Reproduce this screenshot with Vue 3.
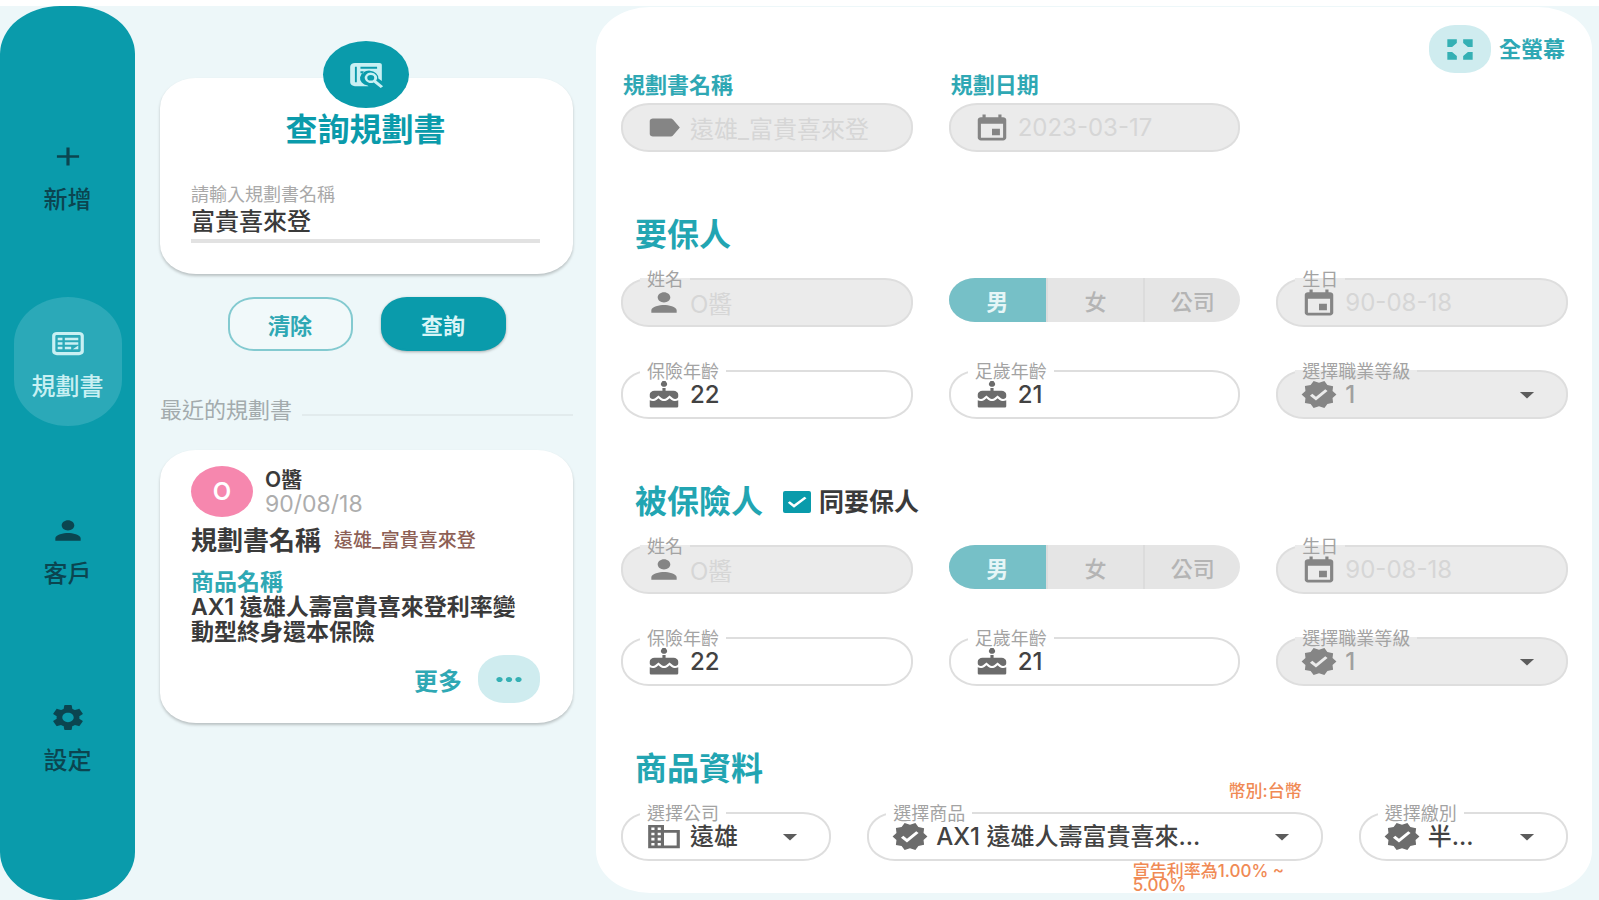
<script setup>
import { h, ref } from 'vue'

const paths = {
  plus: 'M19 13h-6v6h-2v-6H5v-2h6V5h2v6h6v2z',
  plan: 'M19 3H5C3.300 3 2 4.200 2 5.800v12.400C2 19.800 3.300 21 5 21h14c1.700 0 3-1.200 3-2.800V5.800C22 4.200 20.700 3 19 3zM5 5.500h14c.6 0 1 .4 1 1v11c0 .6-.4 1-1 1H5c-.6 0-1-.4-1-1v-11c0-.6.4-1 1-1zM5.500 7.500h3v2h-3zM5.500 11h3v2h-3zM5.500 14.500h3v2h-3zM10 7.500h8.500v2H10zM10 11h8.500v2H10zM10 14.500h4v2h-4zM18.500 13.500v3H15z',
  person: 'M12 12c2.210 0 4-1.790 4-4s-1.790-4-4-4-4 1.790-4 4 1.790 4 4 4zm0 2c-2.670 0-8 1.340-8 4v2h16v-2c0-2.660-5.330-4-8-4z',
  gear: 'M19.140 12.940c.04-.3.06-.61.06-.94 0-.32-.02-.64-.07-.94l2.030-1.580c.18-.14.23-.41.12-.61l-1.920-3.320c-.12-.22-.37-.29-.59-.22l-2.390.96c-.5-.38-1.030-.7-1.620-.94l-.36-2.540c-.04-.24-.24-.41-.48-.41h-3.840c-.24 0-.43.17-.47.41l-.36 2.540c-.59.24-1.130.57-1.620.94l-2.390-.96c-.22-.08-.47 0-.59.22L2.740 8.870c-.12.21-.08.47.12.61l2.030 1.580c-.05.3-.09.63-.09.94s.02.64.07.94l-2.030 1.580c-.18.14-.23.41-.12.61l1.920 3.320c.12.22.37.29.59.22l2.390-.96c.5.38 1.030.7 1.620.94l.36 2.540c.05.24.24.41.48.41h3.840c.24 0 .44-.17.47-.41l.36-2.540c.59-.24 1.130-.56 1.620-.94l2.390.96c.22.08.47 0 .59-.22l1.920-3.320c.12-.22.07-.47-.12-.61l-2.010-1.580zM12 15.600c-1.980 0-3.600-1.620-3.600-3.600s1.620-3.600 3.600-3.600 3.600 1.620 3.600 3.600-1.620 3.600-3.600 3.600z',
  search: 'M5 3h15.500a1.500 1.500 0 0 1 1.500 1.500V17l-2.200-2A5.800 5.800 0 1 0 13 20.500l.6.5H5a3 3 0 0 1-3-3V6a3 3 0 0 1 3-3zm0 3v12h1.200V6zm3.500 0v1.500H19V6zm0 3.500V11h2V9.500zM15 10.500a4 4 0 0 1 3.400 6.100L22.800 21l-1.500 1.500-4.400-4.400A4 4 0 1 1 15 10.500zm0 1.800a2.200 2.200 0 1 0 0 4.400 2.200 2.200 0 0 0 0-4.400z',
  tag: 'M17.630 5.840C17.270 5.330 16.670 5 16 5L5 5.010C3.900 5.010 3 5.900 3 7v10c0 1.100.9 1.990 2 1.990L16 19c.67 0 1.270-.33 1.630-.84L22 12l-4.370-6.160z',
  calendar: 'M19 4h-1V2h-2v2H8V2H6v2H5c-1.110 0-1.990.9-1.990 2L3 20c0 1.100.89 2 2 2h14c1.100 0 2-.9 2-2V6c0-1.100-.9-2-2-2zm0 16H5V9h14v11zm-2-7h-5v5h5v-5z',
  cake: 'M12 6c1.110 0 2-.9 2-2 0-.38-.1-.73-.29-1.030L12 0l-1.710 2.970c-.19.3-.29.65-.29 1.030 0 1.100.9 2 2 2zm4.600 9.990l-1.070-1.070-1.080 1.070c-1.300 1.300-3.580 1.310-4.890 0l-1.070-1.070-1.090 1.070C6.750 16.640 5.880 17 4.960 17c-.73 0-1.400-.23-1.960-.61V21c0 .55.45 1 1 1h16c.55 0 1-.45 1-1v-4.610c-.56.38-1.230.61-1.960.61-.92 0-1.790-.36-2.440-1.010zM18 9h-5V7h-2v2H6c-1.660 0-3 1.340-3 3v1.540c0 1.080.88 1.960 1.960 1.960.52 0 1.020-.2 1.380-.57l2.140-2.130 2.130 2.130c.74.74 2.030.74 2.770 0l2.140-2.130 2.130 2.130c.37.37.86.57 1.380.57 1.080 0 1.960-.88 1.960-1.960V12C21 10.340 19.660 9 18 9z',
  badge: 'M23 12l-2.440-2.790.34-3.690-3.610-.82-1.890-3.200L12 2.960 8.600 1.500 6.710 4.690 3.100 5.500l.34 3.700L1 12l2.440 2.790-.34 3.700 3.610.82L8.600 22.500l3.400-1.470 3.400 1.460 1.890-3.190 3.610-.82-.34-3.690L23 12zm-12.910 4.720l-3.800-3.810 1.480-1.480 2.320 2.330 5.850-5.870 1.480 1.480-7.330 7.350z',
  company: 'M12 7V3H2v18h20V7H12zM6 19H4v-2h2v2zm0-4H4v-2h2v2zm0-4H4V9h2v2zm0-4H4V5h2v2zm4 12H8v-2h2v2zm0-4H8v-2h2v2zm0-4H8V9h2v2zm0-4H8V5h2v2zm10 12h-8V9h8v10z',
  caret: 'M7 10l5 5 5-5z',
  full: 'M4 4h6v3l-3 3H4zM20 4v6h-3l-3-3V4zM4 20v-6h3l3 3v3zM20 20h-6v-3l3-3h3z',
  dots: 'M6 10c-1.100 0-2 .9-2 2s.9 2 2 2 2-.9 2-2-.9-2-2-2zm12 0c-1.100 0-2 .9-2 2s.9 2 2 2 2-.9 2-2-.9-2-2-2zm-6 0c-1.100 0-2 .9-2 2s.9 2 2 2 2-.9 2-2-.9-2-2-2z',
  check: 'M9 15.200L4.800 11l-2 2L9 19.500 21.500 7l-2-2z'
}

const Icon = (props) =>
  h('svg', { viewBox: '0 0 24 24', preserveAspectRatio: 'none', 'aria-hidden': 'true' }, [
    h('path', { d: paths[props.name], fill: 'currentColor', 'fill-rule': 'evenodd' })
  ])
Icon.props = ['name']

const nav = [
  { icon: 'plus', text: '新增' },
  { icon: 'plan', text: '規劃書', active: true },
  { icon: 'person', text: '客戶' },
  { icon: 'gear', text: '設定' }
]
const keyword = ref('富貴喜來登')
const sameAsApplicant = ref(true)
const people = [
  { id: 'applicant', title: '要保人' },
  { id: 'insured', title: '被保險人', same: true }
]
const genders = ['男', '女', '公司']
</script>

<template>
  <div class="page">
    <nav class="rail">
      <a v-for="n in nav" :key="n.text" href="#" class="nav-item" :class="{ active: n.active }">
        <Icon :name="n.icon" class="icon" />
        <span>{{ n.text }}</span>
      </a>
    </nav>

    <aside class="side">
      <section class="card search">
        <div class="bubble"><Icon name="search" class="icon" /></div>
        <h2>查詢規劃書</h2>
        <label for="keyword">請輸入規劃書名稱</label>
        <input id="keyword" v-model="keyword" type="text" />
      </section>
      <div class="actions">
        <button type="button" class="btn">清除</button>
        <button type="button" class="btn solid">查詢</button>
      </div>
      <div class="recent"><span>最近的規劃書</span></div>
      <article class="card plan">
        <header>
          <div class="avatar">O</div>
          <div class="who"><strong>O醬</strong><time>90/08/18</time></div>
        </header>
        <p class="plan-name"><b>規劃書名稱</b><span>遠雄_富貴喜來登</span></p>
        <h3>商品名稱</h3>
        <p class="product">AX1 遠雄人壽富貴喜來登利率變<br />動型終身還本保險</p>
        <footer>
          <span id="more-label">更多</span>
          <button type="button" class="soft" aria-labelledby="more-label"><Icon name="dots" class="icon" /></button>
        </footer>
      </article>
    </aside>

    <main class="main">
      <div class="top">
        <button id="full" type="button" class="soft" aria-labelledby="full-label"><Icon name="full" class="icon" /></button>
        <label id="full-label" for="full">全螢幕</label>
      </div>
      <div class="grid">
        <div>
          <label class="above" for="plan-name">規劃書名稱</label>
          <div class="field off">
            <Icon name="tag" class="icon" />
            <input id="plan-name" type="text" value="遠雄_富貴喜來登" disabled />
          </div>
        </div>
        <div>
          <label class="above" for="plan-date">規劃日期</label>
          <div class="field off">
            <Icon name="calendar" class="icon" />
            <input id="plan-date" type="text" value="2023-03-17" disabled />
          </div>
        </div>
      </div>

      <section v-for="p in people" :key="p.id" class="section">
        <div class="heading">
          <h2>{{ p.title }}</h2>
          <label v-if="p.same" class="same">
            <span class="box">
              <input v-model="sameAsApplicant" type="checkbox" />
              <Icon v-if="sameAsApplicant" name="check" class="tick" />
            </span>
            同要保人
          </label>
        </div>
        <div class="grid">
          <div class="field off">
            <label :for="p.id + '-name'">姓名</label>
            <Icon name="person" class="icon" />
            <input :id="p.id + '-name'" type="text" value="O醬" disabled />
          </div>
          <div class="toggle" role="radiogroup" aria-label="性別">
            <label v-for="(g, i) in genders" :key="g" :class="{ on: i === 0 }">
              <input type="radio" :name="p.id + '-gender'" :checked="i === 0" disabled />{{ g }}
            </label>
          </div>
          <div class="field off">
            <label :for="p.id + '-birth'">生日</label>
            <Icon name="calendar" class="icon" />
            <input :id="p.id + '-birth'" type="text" value="90-08-18" disabled />
          </div>
          <div class="field">
            <label :for="p.id + '-age'">保險年齡</label>
            <Icon name="cake" class="icon" />
            <input :id="p.id + '-age'" type="text" value="22" />
          </div>
          <div class="field">
            <label :for="p.id + '-full-age'">足歲年齡</label>
            <Icon name="cake" class="icon" />
            <input :id="p.id + '-full-age'" type="text" value="21" />
          </div>
          <div class="field off">
            <label :for="p.id + '-job'">選擇職業等級</label>
            <Icon name="badge" class="icon" />
            <select :id="p.id + '-job'" disabled><option>1</option></select>
            <Icon name="caret" class="caret" />
          </div>
        </div>
      </section>

      <section class="section">
        <div class="heading"><h2>商品資料</h2></div>
        <div class="grid goods">
          <div class="field">
            <label for="company">選擇公司</label>
            <Icon name="company" class="icon" />
            <select id="company"><option>遠雄</option></select>
            <Icon name="caret" class="caret" />
          </div>
          <div class="field">
            <span class="note currency">幣別:台幣</span>
            <label for="product">選擇商品</label>
            <Icon name="badge" class="icon" />
            <select id="product"><option>AX1 遠雄人壽富貴喜來...</option></select>
            <Icon name="caret" class="caret" />
            <span class="note rate">宣告利率為1.00% ~ 5.00%</span>
          </div>
          <div class="field">
            <label for="period">選擇繳別</label>
            <Icon name="badge" class="icon" />
            <select id="period"><option>半...</option></select>
            <Icon name="caret" class="caret" />
          </div>
        </div>
      </section>
    </main>
  </div>
</template>

<style>
body {
  margin: 0;
  background: #fff;
}
</style>

<style scoped>
* {
  box-sizing: border-box;
}
.page {
  --teal: #0a9bab;
  display: grid;
  grid-template-columns: 135px 461px minmax(0, 1fr);
  min-height: calc(100vh - 6px);
  margin-top: 6px;
  padding-right: 7px;
  background: #edf7f9;
  color: #3a3a3a;
  font-family: Inter, "Noto Sans CJK TC", sans-serif;
}
h2, h3, p {
  margin: 0;
}
button, input, select {
  font-family: inherit;
}
.icon {
  width: 38px;
  height: 31px;
  flex: none;
}

/* navigation rail */
.rail {
  display: flex;
  flex-direction: column;
  align-items: center;
  gap: 58px;
  padding-top: 104px;
  background: var(--teal);
  border-radius: 60px / 48px;
}
.nav-item {
  display: flex;
  flex-direction: column;
  align-items: center;
  gap: 14px;
  width: 108px;
  height: 129px;
  padding-top: 31px;
  border-radius: 54px / 46px;
  color: #0b4550;
  font-size: 24px;
  font-weight: 500;
  line-height: 28px;
  text-decoration: none;
}
.nav-item.active {
  background: #2ba9b8;
  color: #c9f0f3;
}

/* search and recent plans */
.side {
  padding: 72px 23px 0 25px;
}
.card {
  background: #fff;
  border-radius: 36px / 30px;
  box-shadow: 0 2px 3px rgba(0, 0, 0, 0.22);
}
.search {
  position: relative;
  display: flex;
  flex-direction: column;
  height: 196px;
  padding: 34px 33px 0 31px;
}
.bubble {
  position: absolute;
  top: -37px;
  left: calc(50% - 44px);
  display: grid;
  place-items: center;
  width: 86px;
  height: 67px;
  border-radius: 50%;
  background: var(--teal);
  color: #c9f0f3;
}
.search h2 {
  color: var(--teal);
  font-size: 32px;
  font-weight: 700;
  line-height: 36px;
  text-align: center;
}
.search label {
  margin-top: 36px;
  color: #a9a9a9;
  font-size: 18px;
  line-height: 22px;
}
.search input {
  width: 100%;
  height: 37px;
  padding: 0 0 6px;
  border: 0;
  border-bottom: 4px solid #e2e2e2;
  background: none;
  color: #3a3a3a;
  font-size: 24px;
  font-weight: 500;
  outline: none;
}
.actions {
  display: flex;
  justify-content: center;
  gap: 28px;
  margin-top: 23px;
}
.btn {
  width: 125px;
  height: 54px;
  border: 2px solid #83cad0;
  border-radius: 26px / 22px;
  background: #f1f9fa;
  color: #2fa8b4;
  font-size: 22px;
  font-weight: 700;
}
.btn.solid {
  border-color: var(--teal);
  background: var(--teal);
  color: #d8f4f6;
  box-shadow: 0 1px 3px rgba(0, 0, 0, 0.3);
}
.recent {
  display: flex;
  align-items: center;
  gap: 10px;
  margin-top: 46px;
  color: #a3abad;
  font-size: 22px;
  line-height: 26px;
}
.recent::after {
  content: "";
  flex: 1;
  height: 2px;
  margin-top: 10px;
  background: #e2ebed;
}
.plan {
  margin-top: 27px;
  padding: 16px 33px 20px 31px;
}
.plan header {
  display: flex;
  align-items: center;
  gap: 12px;
}
.avatar {
  display: grid;
  place-items: center;
  width: 62px;
  height: 51px;
  border-radius: 50%;
  background: #f687ae;
  color: #fff;
  font-size: 24px;
  font-weight: 600;
}
.who {
  display: flex;
  flex-direction: column;
  font-size: 21px;
  line-height: 25px;
}
.who strong {
  font-weight: 600;
}
.who time {
  color: #adadad;
  font-size: 23px;
}
.plan-name {
  display: flex;
  align-items: center;
  gap: 13px;
  margin-top: 9px;
  font-size: 26px;
  line-height: 30px;
}
.plan-name span {
  color: #8d5f55;
  font-size: 19px;
  font-weight: 500;
}
.plan h3 {
  margin-top: 13px;
  color: #2fa8b4;
  font-size: 23px;
  font-weight: 600;
  line-height: 26px;
}
.product {
  font-size: 23px;
  font-weight: 600;
  line-height: 25px;
  white-space: nowrap;
}
.plan footer {
  display: flex;
  align-items: center;
  justify-content: flex-end;
  gap: 16px;
  margin-top: 10px;
  color: #2fa8b4;
  font-size: 24px;
  font-weight: 700;
}
.soft {
  display: grid;
  place-items: center;
  width: 62px;
  height: 48px;
  padding: 0;
  border: 0;
  border-radius: 26px / 22px;
  background: #cfecef;
  color: #35b0b4;
}

/* plan form */
.main {
  margin: 1px 0 7px;
  padding: 18px 24px 31px 25px;
  border-radius: 54px / 42px;
  background: #fff;
}
.top {
  display: flex;
  align-items: center;
  justify-content: flex-end;
  gap: 8px;
  padding-right: 3px;
  color: #2fa8b4;
  font-size: 22px;
  font-weight: 700;
  line-height: 24px;
}
.above {
  display: block;
  margin: 0 0 6px 2px;
  color: #2fa8b4;
  font-size: 22px;
  font-weight: 700;
  line-height: 24px;
}
.grid {
  display: grid;
  grid-template-columns: repeat(3, minmax(0, 1fr));
  gap: 43px 36px;
}
.goods {
  grid-template-columns: 211fr 457fr 210fr;
}
.section {
  margin-top: 65px;
}
.heading {
  display: flex;
  align-items: center;
  gap: 20px;
  height: 36px;
  margin: 0 0 25px 14px;
}
.heading h2 {
  color: #22a5b2;
  font-size: 32px;
  font-weight: 600;
  line-height: 36px;
}
.same {
  display: flex;
  align-items: center;
  gap: 8px;
  font-size: 25px;
  font-weight: 600;
  line-height: 30px;
}
.box {
  position: relative;
  width: 28px;
  height: 22px;
}
.box input {
  display: block;
  width: 100%;
  height: 100%;
  margin: 0;
  border-radius: 2px;
  background: var(--teal);
  appearance: none;
}
.tick {
  position: absolute;
  inset: 0;
  width: 28px;
  height: 22px;
  padding: 2px;
  color: #fff;
  pointer-events: none;
}
.field {
  --fill: #fff;
  position: relative;
  display: flex;
  align-items: center;
  gap: 7px;
  height: 49px;
  padding: 0 22px;
  border: 2px solid #dedede;
  border-radius: 28px / 23px;
  background: var(--fill);
  color: #424242;
}
.field.off {
  --fill: #ebebeb;
}
.field .icon {
  color: #6c6c6c;
}
.field.off .icon {
  color: #858585;
}
.field label {
  position: absolute;
  top: -9px;
  left: 17px;
  padding: 0 7px;
  background: linear-gradient(#fff 7px, var(--fill) 7px);
  color: #a3a3a3;
  font-size: 18px;
  line-height: 18px;
}
.field input,
.field select {
  flex: 1;
  min-width: 0;
  height: 100%;
  padding: 0;
  border: 0;
  background: none;
  color: inherit;
  font-size: 24px;
  font-weight: 500;
  opacity: 1;
  outline: none;
  appearance: none;
}
.field input:disabled {
  color: #d6d6d6;
  font-weight: 400;
}
.field select:disabled {
  color: #a0a0a0;
}
.caret {
  width: 34px;
  height: 31px;
  flex: none;
  color: #5c5c5c;
  pointer-events: none;
}
.field .caret {
  margin-left: -7px;
}
.toggle {
  display: grid;
  grid-template-columns: repeat(3, 1fr);
  height: 44px;
  border-radius: 26px / 22px;
  background: #e5e5e5;
  color: #b4b4b4;
  font-size: 22px;
  font-weight: 500;
  overflow: hidden;
}
.toggle label {
  display: grid;
  place-items: center;
  border-left: 2px solid #dcdcdc;
}
.toggle .on {
  border-left: 0;
  background: #76c0c7;
  color: #e6f6f7;
  font-weight: 700;
}
.toggle input {
  position: absolute;
  margin: 0;
  opacity: 0;
}
.note {
  position: absolute;
  color: #f08a55;
  font-size: 17px;
  font-weight: 500;
  line-height: 14px;
}
.currency {
  top: -30px;
  right: 19px;
}
.rate {
  top: 50px;
  right: 20px;
  width: 168px;
}
</style>
